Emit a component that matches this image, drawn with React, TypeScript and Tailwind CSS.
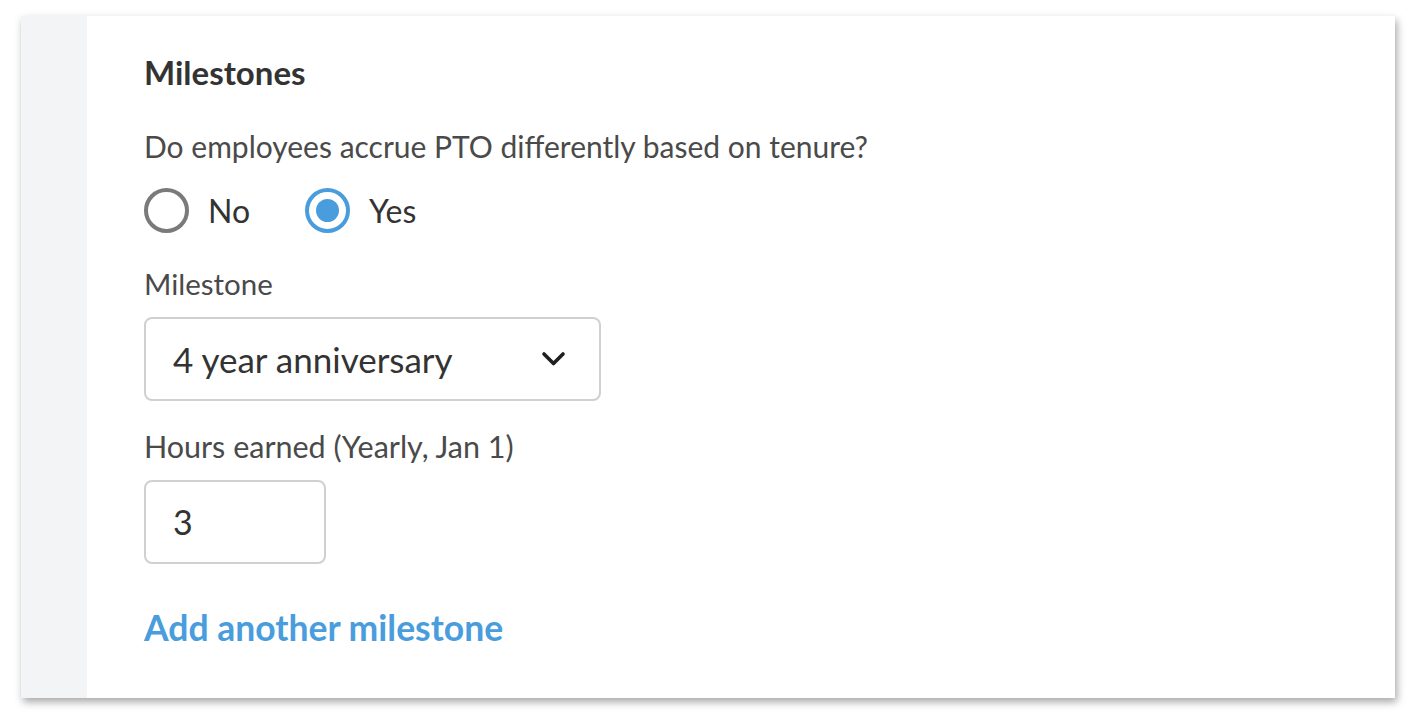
const font = { fontFamily: "Lato, 'Open Sans', sans-serif" };

const Radio = ({ label, checked }: { label: string; checked?: boolean }) => (
  <label className="flex items-center gap-[19px]">
    <span
      className={
        checked
          ? "w-[45px] h-[45px] rounded-full border-[4px] border-[#4a9ddd] flex items-center justify-center"
          : "w-[45px] h-[45px] rounded-full border-[4px] border-[#7a7a7a]"
      }
    >
      {checked && <span className="w-[23px] h-[23px] rounded-full bg-[#4a9ddd]" />}
    </span>
    <span className="text-[32px] text-[#333] leading-[40px]">{label}</span>
  </label>
);

export default function App() {
  return (
    <div className="w-[1414px] h-[719px] bg-white pt-[16px] pl-[21px]" style={font}>
      <div className="w-[1374px] h-[682px] flex bg-white shadow-[2px_4px_8px_rgba(0,0,0,0.35)]">
        <div className="w-[66px] bg-[#f3f4f6]" />
        <div className="flex-1 pl-[57px] pt-[36px] flex flex-col items-start">
          {/* Title */}
          <h2 className="text-[33px] font-bold text-[#333] leading-[40px]">Milestones</h2>

          <p className="mt-[34px] text-[30px] text-[#4a4a4a] leading-[40px]">
            Do employees accrue PTO differently based on tenure?
          </p>

          <div className="mt-[22px] flex items-center gap-[55px]">
            <Radio label="No" />
            <Radio label="Yes" checked />
          </div>

          <p className="mt-[31px] text-[29.5px] text-[#4a4a4a] leading-[40px]">Milestone</p>
          <div className="mt-[13px] w-[457px] h-[84px] rounded-[8px] border-2 border-[#d0d0d0] flex items-center justify-between pl-[27px] pr-[33px]">
            <span className="text-[35px] text-[#333] leading-[44px]">4 year anniversary</span>
            <svg width="25" height="16" viewBox="0 0 25 16" fill="none">
              <polyline
                points="3,3 12.5,12.5 22,3"
                stroke="#1f1f1f"
                strokeWidth="3.6"
                strokeLinecap="round"
                strokeLinejoin="round"
              />
            </svg>
          </div>

          <p className="mt-[25px] text-[30.5px] text-[#4a4a4a] leading-[40px]">
            Hours earned (Yearly, Jan 1)
          </p>
          <div className="mt-[14px] w-[182px] h-[84px] rounded-[8px] border-2 border-[#d0d0d0] flex items-center pl-[27px]">
            <span className="text-[34px] text-[#333] leading-[44px]">3</span>
          </div>

          <a className="mt-[42px] text-[35.5px] font-bold text-[#4a9ddd] leading-[44px]">
            Add another milestone
          </a>
        </div>
      </div>
    </div>
  );
}
